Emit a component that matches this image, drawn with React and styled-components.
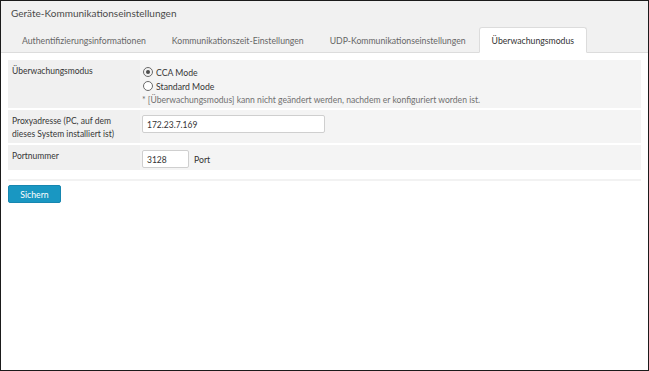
import React from 'react';
import styled, { createGlobalStyle } from 'styled-components';

const GlobalStyle = createGlobalStyle`
  html, body {
    margin: 0;
    padding: 0;
    background: #ffffff;
  }
  body {
    font-family: Lato, "Open Sans", sans-serif;
    color: #333333;
  }
  * { box-sizing: border-box; }
`

const Frame = styled.div`
  width: 649px;
  height: 371px;
  border: 1px solid #1b1b1b;
  background: #ffffff;
  display: flex;
  flex-direction: column;
`

const Header = styled.div`
  background: #f1f1f1;
  border-bottom: 1px solid #dcdcdc;
  height: 52px;
  display: flex;
  flex-direction: column;
  justify-content: space-between;
`

const Title = styled.div`
  font-size: 10px;
  color: #4a4a4a;
  padding: 4px 0 0 10px;
  line-height: 16px;
`

const TabBar = styled.div`
  display: flex;
  align-items: flex-end;
  padding-left: 8px;
  margin-bottom: -1px;
`

const Tab = styled.div`
  height: 26px;
  padding: 0 12px;
  display: flex;
  align-items: center;
  font-size: 8.7px;
  color: ${(p) => (p.active ? '#333333' : '#666666')};
  background: ${(p) => (p.active ? '#ffffff' : 'transparent')};
  border: 1px solid ${(p) => (p.active ? '#dcdcdc' : 'transparent')};
  border-bottom-color: ${(p) => (p.active ? '#ffffff' : 'transparent')};
  border-radius: 3px 3px 0 0;
`

const Content = styled.div`
  padding: 7px 7px 0 7px;
  display: flex;
  flex-direction: column;
`

const FormTable = styled.div`
  display: flex;
  flex-direction: column;
  gap: 2px;
  border-bottom: 2px solid #f2f2f2;
  padding-bottom: 9px;
`

const Row = styled.div`
  display: grid;
  grid-template-columns: 132px 1fr;
  min-height: ${(p) => p.h}px;
`

const LabelCell = styled.div`
  background: #f0f0f0;
  font-size: 8.5px;
  line-height: 13px;
  padding: 5px 4px 0 4px;
  color: #363636;
`

const ValueCell = styled.div`
  background: #f4f4f4;
  padding: 5px 4px 2px 2px;
  display: flex;
  flex-direction: column;
`

const RadioLine = styled.label`
  display: flex;
  align-items: center;
  gap: 3px;
  height: 14px;
  font-size: 8.7px;
  color: #363636;
`

const RadioCircle = styled.span`
  width: 10px;
  height: 10px;
  margin-left: 1px;
  border-radius: 50%;
  border: 1px solid #6a6a6a;
  background: ${(p) => (p.checked ? '#f2f2f2' : '#ffffff')};
  display: inline-flex;
  align-items: center;
  justify-content: center;
  &::after {
    content: '';
    width: 4px;
    height: 4px;
    border-radius: 50%;
    background: ${(p) => (p.checked ? '#4d4d4d' : 'transparent')};
  }
`

const Note = styled.div`
  font-size: 8.6px;
  color: #707070;
  line-height: 12px;
  margin-top: 1px;
`

const InputLine = styled.div`
  display: flex;
  align-items: center;
  gap: 5px;
  font-size: 8.7px;
`

const TextBox = styled.div`
  width: ${(p) => p.w}px;
  height: 18px;
  border: 1px solid #cfcfcf;
  border-radius: 2px;
  background: #ffffff;
  font-size: 8.5px;
  padding: 2px 4px 0 4px;
  display: flex;
  align-items: center;
  color: #333333;
`

const SaveButton = styled.button`
  margin-top: 4px;
  width: 53px;
  height: 18px;
  border: 1px solid #1686b0;
  border-radius: 2px;
  background: #1997c2;
  color: #ffffff;
  font-family: inherit;
  font-size: 8.7px;
  padding: 0;
`

export default function App() {
  return (
    <>
      <GlobalStyle />
      <Frame>
        <Header>
          <Title>Geräte-Kommunikationseinstellungen</Title>
          <TabBar>
            <Tab>Authentifizierungsinformationen</Tab>
            <Tab>Kommunikationszeit-Einstellungen</Tab>
            <Tab>UDP-Kommunikationseinstellungen</Tab>
            <Tab active>Überwachungsmodus</Tab>
          </TabBar>
        </Header>
        <Content>
          <FormTable>
            <Row h={48}>
              <LabelCell>Überwachungsmodus</LabelCell>
              <ValueCell>
                <RadioLine><RadioCircle checked />CCA Mode</RadioLine>
                <RadioLine><RadioCircle />Standard Mode</RadioLine>
                <Note>* [Überwachungsmodus] kann nicht geändert werden, nachdem er konfiguriert worden ist.</Note>
              </ValueCell>
            </Row>
            <Row h={33}>
              <LabelCell>Proxyadresse (PC, auf dem dieses System installiert ist)</LabelCell>
              <ValueCell>
                <TextBox w={183}>172.23.7.169</TextBox>
              </ValueCell>
            </Row>
            <Row h={23}>
              <LabelCell>Portnummer</LabelCell>
              <ValueCell>
                <InputLine>
                  <TextBox w={47}>3128</TextBox>
                  Port
                </InputLine>
              </ValueCell>
            </Row>
          </FormTable>
          <div>
            <SaveButton>Sichern</SaveButton>
          </div>
        </Content>
      </Frame>
    </>
  );
}
